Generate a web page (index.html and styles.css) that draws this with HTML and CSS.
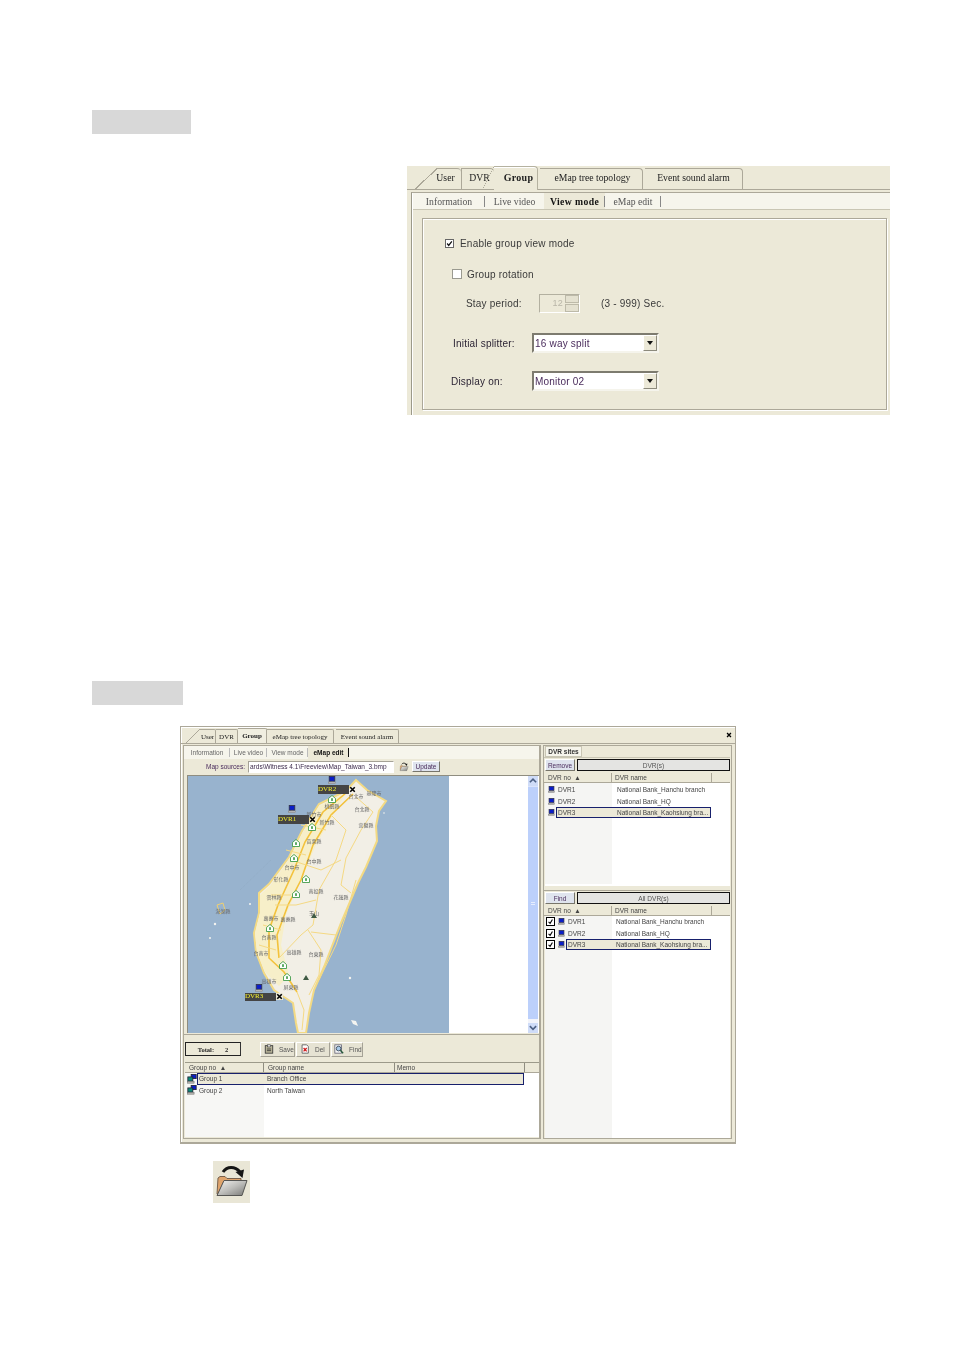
FILE: index.html
```html
<!DOCTYPE html>
<html lang="en">
<head>
<meta charset="utf-8">
<title>Group settings</title>
<link rel="stylesheet" href="styles.css">
</head>
<body>
<svg class="defs" width="0" height="0" aria-hidden="true">
  <symbol id="pc" viewBox="0 0 10 10">
    <rect x="1.5" y="0.5" width="7" height="6" fill="#0a1ec8" stroke="#334"/>
    <rect x="3.5" y="6.5" width="3" height="1" fill="#667"/>
    <rect x="0.5" y="7.5" width="9" height="2" fill="#c9c9c9" stroke="#777" stroke-width=".6"/>
  </symbol>
  <symbol id="grp" viewBox="0 0 12 12">
    <rect x="5" y="0.5" width="6" height="5" fill="#0a1ec8" stroke="#223"/>
    <rect x="1" y="3.5" width="6" height="5" fill="#0c8a78" stroke="#223"/>
    <rect x="0.5" y="9" width="8" height="2" fill="#b8b8b0" stroke="#666" stroke-width=".6"/>
  </symbol>
  <symbol id="shield" viewBox="0 0 10 10">
    <path d="M5 .6 9.4 4.4V9.4H.6V4.4Z" fill="#fff" stroke="#3c9a44" stroke-width="1.1"/>
    <rect x="3.8" y="4" width="2.4" height="3.4" fill="#59a85f"/>
  </symbol>
  <symbol id="cross" viewBox="0 0 8 8">
    <path d="M1.4 1.4 6.6 6.6M6.6 1.4 1.4 6.6" stroke="#000" stroke-width="1.8"/>
  </symbol>
  <symbol id="opener" viewBox="0 0 37 42">
    <defs>
      <linearGradient id="front" x1="0" y1="0" x2="1" y2="1">
        <stop offset="0" stop-color="#f4f4f2"/>
        <stop offset=".5" stop-color="#bdbdba"/>
        <stop offset="1" stop-color="#777775"/>
      </linearGradient>
    </defs>
    <path d="M10 11C14 5 22 5 27 11" fill="none" stroke="#151515" stroke-width="3"/>
    <path d="M22.500 11 31 8.500 29.500 17Z" fill="#151515"/>
    <path d="M4 33 5 17 7 15.500H12L14 17.500H28V20H11L5 33Z" fill="#dfa46c" stroke="#6a5644" stroke-width=".9"/>
    <path d="M4 34.500 11 19.500H34L29 34.500Z" fill="url(#front)" stroke="#555553" stroke-width="1"/>
  </symbol>
</svg>

<main class="page">
  <div class="bar bar-a"></div>

  <section class="win1">
    <nav class="tabs1">
      <span class="t1 t1-user">User</span>
      <span class="t1 t1-dvr">DVR</span>
      <span class="t1 t1-group on">Group</span>
      <span class="t1 t1-map">eMap tree topology</span>
      <span class="t1 t1-event">Event sound alarm</span>
    </nav>
    <div class="body1">
      <nav class="sub1">
        <span class="s1 s1-info">Information</span>
        <span class="s1 s1-live">Live video</span>
        <span class="s1 s1-view on">View mode</span>
        <span class="s1 s1-edit">eMap edit</span>
      </nav>
      <div class="panel1">
        <label class="row r-enable"><span class="cb checked"><svg viewBox="0 0 9 9"><path d="M1.500 4.500 3.500 7 7.500 1.800" fill="none" stroke="#111" stroke-width="1.600"/></svg></span>Enable group view mode</label>
        <label class="row r-rotate"><span class="cb"></span>Group rotation</label>
        <div class="row r-stay">
          <span class="lab-stay">Stay period:</span>
          <span class="spin"><span class="spin-val">12</span><span class="spin-btns"><i></i><i></i></span></span>
          <span class="range">(3 - 999) Sec.</span>
        </div>
        <div class="row r-split">
          <span class="lab-split">Initial splitter:</span>
          <span class="sel"><span class="sel-val">16 way split</span><span class="sel-btn"></span></span>
        </div>
        <div class="row r-disp">
          <span class="lab-disp">Display on:</span>
          <span class="sel"><span class="sel-val">Monitor 02</span><span class="sel-btn"></span></span>
        </div>
      </div>
    </div>
  </section>

  <div class="bar bar-b"></div>

  <section class="win2">
    <header class="tabs2">
      <span class="t2 t2-user">User</span>
      <span class="t2 t2-dvr">DVR</span>
      <span class="t2 t2-group on">Group</span>
      <span class="t2 t2-map">eMap tree topology</span>
      <span class="t2 t2-event">Event sound alarm</span>
      <svg class="close"><use href="#cross"/></svg>
    </header>
    <div class="cols">
      <div class="left">
        <nav class="sub2">
          <span class="s2 s2-info">Information</span>
          <span class="s2 s2-live">Live video</span>
          <span class="s2 s2-view">View mode</span>
          <span class="s2 s2-edit on">eMap edit</span>
        </nav>
        <div class="source">
          <span class="src-lab">Map sources:</span>
          <span class="src-input">ards\Witness 4.1\Freeview\Map_Taiwan_3.bmp</span>
          <svg class="src-open"><use href="#opener"/></svg>
          <span class="btn src-up">Update</span>
        </div>
        <div class="mapwrap">
          <div class="map">
            <svg class="mapsvg" viewBox="187 776 261 257">
              <rect x="187" y="776" width="261" height="257" fill="#98b3ce"/>
              <path d="M355 780 366 790 385 801 378 811 375 826 376 841 365 867 357 883 340 923 323 967 313 990 308 1013 305 1033 297 1033 295 1023 292 1003 280 995 273 990 263 973 255 952 253 933 258 913 258 893 268 884 288 857 301 831 318 804 345 791Z" fill="#f2efe6" stroke="#f3da84" stroke-width="2"/>
              <path d="M345 793 318 806 302 832 289 858 269 886 259 895 259 913 254 933 256 952 264 972 278 986 288 975 280 945 285 915 300 880 315 845 332 815Z" fill="#f7efc9"/>
              <g fill="none" stroke="#f3c23c" stroke-width="1.600">
                <path d="M345 793 322 812 304 842 293 870 277 905 268 930 268 958 283 972 296 992"/>
                <path d="M352 794 330 815 312 845 300 880 287 905 276 935 278 958"/>
              </g>
              <g fill="none" stroke="#f5d983" stroke-width="1">
                <path d="M355 797 372 812 360 830 345 858 340 885 350 893"/>
                <path d="M330 815 345 830 335 860 318 890 312 925 300 935 278 958"/>
                <path d="M310 932 335 935 340 925"/>
                <path d="M307 930 320 950 318 975 308 995"/>
                <path d="M355 880 345 915 335 945 318 980"/>
                <path d="M290 860 320 870 340 860"/>
                <path d="M274 905 295 905 315 900"/>
                <path d="M296 992 303 1010 301 1030"/>
                <path d="M262 925 280 930M258 945 275 950M270 895 290 895M285 850 305 855M300 825 325 830"/>
              </g>
              <path d="M216 905 222 903 224 910 219 914Z" fill="none" stroke="#eecf72"/>
              <g fill="#f4f4f0">
                <circle cx="249" cy="904" r="1"/><circle cx="214" cy="924" r="1.200"/><circle cx="209" cy="938" r="1"/><circle cx="349" cy="978" r="1.200"/><path d="M350 1020 355 1021 357 1026 352 1024Z"/><circle cx="383" cy="813" r=".8"/>
              </g>
              <path d="M239 890 270 860" stroke="#8ea7bf" stroke-width=".6" stroke-dasharray="1 1" fill="none"/>
              <g class="places">
                <text x="373" y="795">基隆市</text><text x="355" y="798">台北市</text><text x="361" y="811">台北縣</text><text x="365" y="827">宜蘭縣</text><text x="331" y="808">桃園縣</text><text x="313" y="816">新竹市</text><text x="326" y="824">新竹縣</text><text x="313" y="843">苗栗縣</text><text x="291" y="869">台中市</text><text x="313" y="863">台中縣</text><text x="280" y="881">彰化縣</text><text x="315" y="893">南投縣</text><text x="340" y="899">花蓮縣</text><text x="273" y="899">雲林縣</text><text x="270" y="920">嘉義市</text><text x="287" y="921">嘉義縣</text><text x="268" y="939">台南縣</text><text x="260" y="955">台南市</text><text x="293" y="954">高雄縣</text><text x="315" y="956">台東縣</text><text x="268" y="983">高雄市</text><text x="290" y="989">屏東縣</text><text x="222" y="913">澎湖縣</text><text x="313" y="915">玉山</text>
              </g>
              <g>
                <use href="#shield" x="327" y="795" width="8" height="8"/><use href="#shield" x="307" y="823" width="8" height="8"/><use href="#shield" x="291" y="839" width="8" height="8"/><use href="#shield" x="289" y="854" width="8" height="8"/><use href="#shield" x="301" y="875" width="8" height="8"/><use href="#shield" x="291" y="890" width="8" height="8"/><use href="#shield" x="265" y="924" width="8" height="8"/><use href="#shield" x="278" y="961" width="8" height="8"/><use href="#shield" x="282" y="973" width="8" height="8"/>
              </g>
              <path d="M310 918 313 913 316 918ZM302 980 305 975 308 980Z" fill="#3f5a44"/>
            </svg>
            <svg class="pin-ic pi-2"><use href="#pc"/></svg>
            <span class="pin-lab pl-2">DVR2</span>
            <svg class="pin-x px-2"><use href="#cross"/></svg>
            <svg class="pin-ic pi-1"><use href="#pc"/></svg>
            <span class="pin-lab pl-1">DVR1</span>
            <svg class="pin-x px-1"><use href="#cross"/></svg>
            <svg class="pin-ic pi-3"><use href="#pc"/></svg>
            <span class="pin-lab pl-3">DVR3</span>
            <svg class="pin-x px-3"><use href="#cross"/></svg>
          </div>
          <div class="scroll">
            <span class="sb-up"><svg viewBox="0 0 8 8"><path d="M1.500 5 4 2.500 6.500 5" fill="none" stroke="#4d6185" stroke-width="1.300"/></svg></span>
            <span class="sb-thumb"><i></i></span>
            <span class="sb-down"><svg viewBox="0 0 8 8"><path d="M1.500 2.500 4 5 6.500 2.500" fill="none" stroke="#4d6185" stroke-width="1.300"/></svg></span>
          </div>
        </div>
        <div class="toolbar">
          <span class="total"><b>Total:</b><b>2</b></span>
          <div class="tools">
            <span class="tool tool-save"><svg viewBox="0 0 12 12"><rect x="1.500" y="2" width="9" height="9" fill="#b9b59a" stroke="#333"/><rect x="4" y="1" width="4" height="2.500" fill="#eee" stroke="#333" stroke-width=".7"/><path d="M3.500 6H8.500M3.500 8H8.500" stroke="#333"/></svg>Save</span>
            <span class="tool tool-del"><svg viewBox="0 0 12 12"><path d="M2.500 1H8L10 3V11H2.500Z" fill="#fff" stroke="#555"/><path d="M4.300 4.800 8 8.800M8 4.800 4.300 8.800" stroke="#d01818" stroke-width="1.500"/></svg>Del</span>
            <span class="tool tool-find"><svg viewBox="0 0 12 12"><rect x="1" y="1" width="8" height="10" fill="#f6f6f6" stroke="#667"/><circle cx="5.500" cy="5.500" r="2.800" fill="#a8c9e8" stroke="#345"/><path d="M7.500 7.500 11 11" stroke="#285a3c" stroke-width="1.700"/></svg>Find</span>
          </div>
        </div>
        <div class="gtable">
          <div class="ghead"><span>Group no &nbsp;&#9650;</span><span>Group name</span><span>Memo</span></div>
          <div class="grows">
            <div class="grow"><svg class="ric"><use href="#grp"/></svg><span class="gcell sel-row"><span class="c-no">Group 1</span><span>Branch Office</span></span></div>
            <div class="grow"><svg class="ric"><use href="#grp"/></svg><span class="gcell"><span class="c-no">Group 2</span><span>North Taiwan</span></span></div>
          </div>
        </div>
      </div>

      <div class="right">
        <div class="sites"><span class="sites-tab">DVR sites</span></div>
        <div class="actions"><span class="btn act">Remove</span><span class="capt">DVR(s)</span></div>
        <div class="lhead"><span>DVR no &nbsp;&#9650;</span><span>DVR name</span><span></span></div>
        <div class="list list-a">
          <div class="lrow"><svg class="pc"><use href="#pc"/></svg><span class="lcell"><span class="n-no">DVR1</span><span>National Bank_Hanchu branch</span></span></div>
          <div class="lrow"><svg class="pc"><use href="#pc"/></svg><span class="lcell"><span class="n-no">DVR2</span><span>National Bank_HQ</span></span></div>
          <div class="lrow"><svg class="pc"><use href="#pc"/></svg><span class="lcell sel-row"><span class="n-no">DVR3</span><span>National Bank_Kaohsiung bra...</span></span></div>
        </div>
        <div class="actions act2"><span class="btn act">Find</span><span class="capt">All DVR(s)</span></div>
        <div class="lhead"><span>DVR no &nbsp;&#9650;</span><span>DVR name</span><span></span></div>
        <div class="list list-b">
          <div class="lrow"><span class="mini"><svg viewBox="0 0 9 9"><path d="M2 5 4 6.800 7 2" fill="none" stroke="#000" stroke-width="1.400"/></svg></span><svg class="pc"><use href="#pc"/></svg><span class="lcell"><span class="n-no2">DVR1</span><span>National Bank_Hanchu branch</span></span></div>
          <div class="lrow"><span class="mini"><svg viewBox="0 0 9 9"><path d="M2 5 4 6.800 7 2" fill="none" stroke="#000" stroke-width="1.400"/></svg></span><svg class="pc"><use href="#pc"/></svg><span class="lcell"><span class="n-no2">DVR2</span><span>National Bank_HQ</span></span></div>
          <div class="lrow"><span class="mini"><svg viewBox="0 0 9 9"><path d="M2 5 4 6.800 7 2" fill="none" stroke="#000" stroke-width="1.400"/></svg></span><svg class="pc"><use href="#pc"/></svg><span class="lcell sel-row"><span class="n-no2">DVR3</span><span>National Bank_Kaohsiung bra...</span></span></div>
        </div>
      </div>
    </div>
  </section>

  <div class="opener"><svg><use href="#opener"/></svg></div>
</main>
</body>
</html>
```
FILE: styles.css
```css
* { box-sizing: border-box; }
html, body { margin: 0; background: #fff; }
body { font-family: "Liberation Sans", Arial, sans-serif; color: #333; }
.defs { position: absolute; }
.page { display: flex; flex-direction: column; align-items: flex-start; height: 1351px; padding-top: 110px; overflow: hidden; }

.bar { height: 24px; background: #d8d8d8; margin-left: 92px; }
.bar-a { width: 99px; }
.bar-b { width: 91px; margin-top: 266px; }

/* ---------- first window ---------- */
.win1 { margin: 32px 0 0 407px; width: 483px; height: 249px; background: #ece9d8; display: flex; flex-direction: column; filter: blur(.35px); overflow: hidden; }
.tabs1 { display: flex; height: 24px; flex: none; align-items: stretch; padding: 2px 0 0 30px; font: 9.700px "Liberation Serif", serif; color: #222; border-bottom: 1px solid #aca899; }
.t1 { position: relative; display: flex; align-items: center; justify-content: center; padding-bottom: 3px; border-top: 1px solid #aca899; border-right: 1px solid #aca899; border-top-right-radius: 4px; }
.t1::before { content: ""; position: absolute; left: -12px; top: -1px; bottom: 0; width: 12px; background: linear-gradient(to bottom right, transparent 49%, #aca899 49%, #aca899 53%, transparent 53%); }
.t1-user { width: 24px; padding-right: 7px; border-right: 0; }
.t1-user::before { left: -22px; width: 22px; }
.t1-dvr { width: 33px; padding-left: 3px; border-left: 1px solid #aca899; border-right: 0; }
.t1-dvr::before { display: none; }
.t1-group { width: 44px; font-weight: 700; font-size: 10px; letter-spacing: .3px; padding-left: 6px; margin: -2px 2px -1px 0; background: #ece9d8; box-shadow: inset 0 1px 0 #fff; border-color: #b5b2a0; z-index: 1; }
.t1-map { width: 103px; padding-left: 3px; }
.t1-event { width: 98px; margin-left: 2px; }
.t1-map::before, .t1-event::before { display: none; }
.body1 { flex: 1; margin: 2px 0 0 4px; padding-top: 0; border-left: 1px solid #9c9a8a; border-top: 1px solid #aca899; box-shadow: inset 1px 0 0 #fff; display: flex; flex-direction: column; }
.sub1 { height: 17px; flex: none; margin-left: 1px; display: flex; background: #f6f5ec; font: 9.700px "Liberation Serif", serif; color: #555; border-bottom: 1px solid #c9c6b4; }
.s1 { display: flex; align-items: center; justify-content: center; }
.s1-info { width: 72px; position: relative; }
.s1-info::after, .s1-view::after, .s1-edit::after { content: ""; position: absolute; right: 0; top: 3px; height: 11px; width: 1px; background: #888; }
.s1-live { width: 59px; }
.s1-view { width: 61px; position: relative; background: #ece9d8; color: #111; font-weight: 700; letter-spacing: .4px; }
.s1-edit { width: 56px; position: relative; }
.panel1 { margin: 8px 3px 0 10px; height: 192px; border: 1px solid #aca899; box-shadow: inset 1px 1px 0 #fff, 1px 1px 0 #fff; position: relative; font: 10px "Liberation Sans", sans-serif; color: #3a3a3a; letter-spacing: .2px; display: flex; flex-direction: column; }
.row { display: flex; align-items: center; }
.r-enable { margin: 18px 0 0 22px; height: 12px; gap: 6px; }
.r-rotate { margin: 19px 0 0 29px; height: 12px; gap: 5px; }
.r-stay { margin: 14px 0 0 43px; height: 19px; }
.r-split { margin: 20px 0 0 30px; height: 20px; }
.r-disp { margin: 18px 0 0 28px; height: 20px; }
.cb { width: 9px; height: 9px; background: #fff; border: 1px solid #666; display: block; flex: none; }
.cb svg { display: block; width: 100%; height: 100%; }
.r-rotate .cb { width: 10px; height: 10px; border-color: #9a9a90; }
.lab-stay { width: 73px; }
.spin { width: 41px; height: 19px; display: flex; border: 1px solid #b3b0a0; border-right-color: #fff; border-bottom-color: #fff; background: #ece9d8; }
.spin-val { flex: 1; color: #b9b6a8; font-size: 9px; text-align: right; padding: 3px 2px 0 0; }
.spin-btns { width: 14px; display: flex; flex-direction: column; gap: 1px; }
.spin-btns i { flex: 1; background: #e4e1d0; border: 1px solid #bdbaa9; }
.range { margin-left: 21px; }
.lab-split { width: 79px; color: #2c2434; }
.lab-disp { width: 81px; color: #2c2434; }
.sel { width: 127px; height: 20px; display: flex; align-items: center; background: #fff; border: 2px solid #7d7b6f; border-right-color: #f5f4ec; border-bottom-color: #f5f4ec; }
.sel-val { flex: 1; padding-left: 1px; color: #4a2c5c; }
.sel-btn { width: 14px; height: 16px; background: #ece9d8; border: 1px solid #8c8a7c; border-top-color: #fff; border-left-color: #fff; position: relative; }
.sel-btn::after { content: ""; position: absolute; left: 3px; top: 5px; border: 3.500px solid transparent; border-top: 4px solid #111; border-bottom: 0; }

/* ---------- second window ---------- */
.win2 { margin: 21px 0 0 180px; width: 556px; height: 418px; background: #ece9d8; border: 1px solid #aca899; border-bottom-width: 2px; box-shadow: inset 1px 1px 0 #fff; display: flex; flex-direction: column; font: 6.500px "Liberation Sans", sans-serif; color: #444; filter: blur(.3px); overflow: hidden; }
.tabs2 { height: 17px; flex: none; display: flex; align-items: stretch; padding: 2px 0 0 19px; position: relative; font: 7px "Liberation Serif", serif; color: #222; border-bottom: 1px solid #aca899; }
.t2 { position: relative; display: flex; align-items: center; justify-content: center; border-top: 1px solid #aca899; border-right: 1px solid #aca899; border-top-right-radius: 2px; }
.t2-user { width: 16px; }
.t2-user::before { content: ""; position: absolute; left: -14px; top: -1px; bottom: 0; width: 14px; background: linear-gradient(to bottom right, transparent 48%, #aca899 48%, #aca899 53%, transparent 53%); }
.t2-dvr { width: 22px; }
.t2-group { width: 29px; font-weight: 700; background: #f0eee0; margin-top: -1px; z-index: 1; }
.t2-map { width: 67px; }
.t2-event { width: 63px; margin-left: 2px; }
.close { position: absolute; right: 3px; top: 5px; width: 6px; height: 6px; }
.cols { flex: 1; display: flex; gap: 2px; padding: 1px 3px 3px 2px; min-height: 0; }
.left { width: 358px; flex: none; display: flex; flex-direction: column; border: 1px solid #aca899; border-right-width: 2px; }
.sub2 { height: 13px; flex: none; display: flex; background: #f6f5ec; color: #666; font-family: "Liberation Sans", sans-serif; }
.s2 { display: flex; align-items: center; justify-content: center; position: relative; }
.s2::after { content: ""; position: absolute; right: 0; top: 2px; height: 9px; width: 1px; background: #bbb; }
.s2-info { width: 46px; }
.s2-live { width: 37px; }
.s2-view { width: 41px; }
.s2-edit { width: 41px; background: #ece9d8; color: #111; font-weight: 700; }
.s2-edit::after { background: #111; }
.source { height: 16px; flex: none; display: flex; align-items: center; padding: 0 0 1px 22px; }
.src-lab { width: 42px; color: #4a2c5c; }
.src-input { width: 146px; height: 12px; background: #fff; border: 1px solid #a5a296; border-right-color: #fff; border-bottom-color: #fff; padding: 1px 0 0 1px; color: #3c2a4c; white-space: nowrap; overflow: hidden; }
.src-open { width: 10px; height: 12px; margin: 0 3px 0 5px; flex: none; }
.btn { display: flex; align-items: center; justify-content: center; background: #dfe4ee; border: 1px solid #fff; border-right-color: #77756a; border-bottom-color: #77756a; color: #4a2c5c; }
.src-up { width: 28px; height: 11px; margin-left: 0; }
.mapwrap { height: 258px; flex: none; display: flex; margin: 0 0 0 3px; background: #fff; border-top: 1px solid #8f8d80; border-left: 1px solid #8f8d80; }
.map { width: 340px; flex: none; position: relative; background: #fff; overflow: hidden; }
.mapsvg { display: block; width: 261px; height: 257px; }
.places { font: 5px "Noto Sans CJK TC", sans-serif; fill: #666; text-anchor: middle; }
.pin-ic { position: absolute; width: 8px; height: 8px; }
.pin-lab { position: absolute; width: 31px; height: 9px; background: #444; color: #f2ee30; font: 7px/9px "Liberation Serif", serif; }
.pin-x { position: absolute; width: 7px; height: 7px; background: #ece9d8; }
.pi-2 { left: 140px; top: 0; }
.pl-2 { left: 130px; top: 9px; }
.px-2 { left: 161px; top: 10px; background: transparent; }
.pi-1 { left: 100px; top: 29px; }
.pl-1 { left: 90px; top: 39px; }
.px-1 { left: 121px; top: 40px; background: transparent; }
.pi-3 { left: 67px; top: 208px; }
.pl-3 { left: 57px; top: 217px; height: 8px; line-height: 7px; }
.px-3 { left: 88px; top: 217px; }
.scroll { width: 10px; flex: none; display: flex; flex-direction: column; background: #f2f4fb; }
.sb-up, .sb-down { height: 10px; background: #cfdcf8; display: block; flex: none; }
.sb-up svg, .sb-down svg { display: block; width: 100%; height: 100%; }
.sb-thumb { flex: 1; background: #bcd0fb; display: flex; align-items: center; justify-content: center; border-top: 1px solid #dbe5fc; margin-bottom: 4px; }
.sb-thumb i { width: 4px; height: 3px; border-top: 1px solid #e6edfd; border-bottom: 1px solid #e6edfd; }
.toolbar { height: 26px; flex: none; display: flex; align-items: center; padding: 3px 0 0 1px; border-top: 1px solid #aca899; margin-top: 1px; }
.total { width: 56px; height: 14px; display: flex; justify-content: center; gap: 11px; align-items: center; border: 1px solid #222; border-right-color: #333; background: #ece9d8; color: #222; font: 700 6.500px "Liberation Serif", serif; }
.tools { display: flex; margin-left: 19px; gap: 1px; }
.tool { height: 15px; display: flex; align-items: center; gap: 5px; background: #e6e3d3; border: 1px solid #fff; border-right-color: #a5a296; border-bottom-color: #a5a296; color: #555; }
.tool svg { width: 10px; height: 10px; flex: none; }
.tool-save { width: 35px; padding-left: 3px; }
.tool-del { width: 34px; padding-left: 3px; }
.tool-find { width: 32px; padding-left: 2px; }
.gtable { flex: 1; margin: 2px 0 1px 1px; display: flex; flex-direction: column; min-height: 0; background: #fff; border-top: 1px solid #9c9a8a; }
.ghead { height: 10px; flex: none; display: grid; grid-template-columns: 79px 131px 130px 1fr; background: #ece9d8; border-bottom: 1px solid #aca899; }
.ghead span { padding: 1px 0 0 4px; border-right: 1px solid #8f8d80; }
.ghead span:nth-child(3) { padding-left: 2px; }
.grows { flex: 1; background: linear-gradient(to right, #f7f7f5 79px, #fff 79px); }
.grow { height: 11.500px; display: flex; align-items: center; padding-left: 2px; }
.ric { width: 10px; height: 10px; flex: none; }
.gcell { width: 327px; height: 12px; display: flex; align-items: center; padding-left: 1px; border: 1px solid transparent; }
.c-no { width: 68px; }

.right { flex: 1; min-width: 0; display: flex; flex-direction: column; border: 1px solid #aca899; padding: 0 1px 0 0; }
.sites { height: 12px; flex: none; display: flex; padding: 0 0 0 1px; border-bottom: 1px solid #c9c6b4; }
.sites-tab { width: 37px; display: flex; align-items: center; justify-content: center; font-weight: 700; color: #333; background: #f6f5ec; border: 1px solid #c9c6b4; }
.actions { height: 13px; flex: none; display: flex; gap: 2px; margin-top: 1px; padding-left: 1px; }
.act { width: 30px; height: 12px; }
.capt { flex: 1; height: 12px; background: #e4e4e2; border: 1px solid #111; display: flex; align-items: center; justify-content: center; color: #555; }
.lhead { height: 10px; flex: none; margin-top: 1px; display: grid; grid-template-columns: 67px 100px 1fr; background: #ece9d8; padding-left: 1px; border-bottom: 1px solid #aca899; }
.lhead span { padding: 1px 0 0 3px; border-right: 1px solid #aca899; }
.lhead span:last-child { border-right: 0; }
.list { margin-left: 1px; background: linear-gradient(to right, #f5f5f3 67px, #fff 67px); padding-top: 1px; }
.list-a { height: 103px; flex: none; border-bottom: 2px solid #fff; }
.act2 { margin-top: 4px; border-top: 1px solid #aca899; padding-top: 1px; height: 15px; }
.list-b { flex: 1; padding-top: 0; }
.lrow { height: 11.500px; display: flex; align-items: center; padding-left: 3px; }
.pc { width: 7px; height: 7px; flex: none; }
.lcell { height: 11px; display: flex; align-items: center; border: 1px solid transparent; margin-left: 1px; width: 155px; white-space: nowrap; }
.n-no { width: 60px; padding-left: 1px; }
.n-no2 { width: 49px; padding-left: 1px; }
.list-b .lrow { padding-left: 1px; }
.list-b .lcell { width: 145px; }
.mini { width: 9px; height: 9px; border: 1px solid #000; background: #fff; margin-right: 3px; flex: none; }
.mini svg { display: block; width: 100%; height: 100%; }
.gcell.sel-row, .lcell.sel-row { background: #ece9d8; border: 1px solid #17206c; }

.opener { margin: 17px 0 0 213px; width: 37px; height: 42px; background: #e9e6d6; filter: blur(.6px); }
.opener svg { display: block; width: 100%; height: 100%; }
```
